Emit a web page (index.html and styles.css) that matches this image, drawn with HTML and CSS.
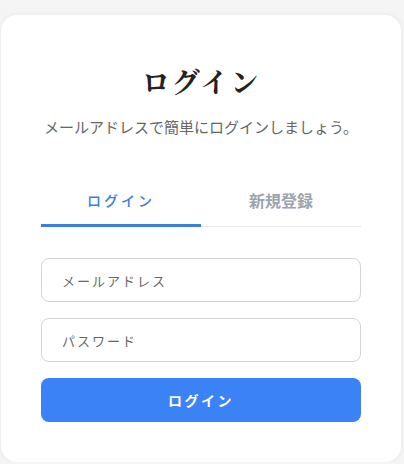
FILE: index.html
```html
<!DOCTYPE html>
<html lang="ja">
<head>
    <meta charset="UTF-8">
    <meta name="viewport" content="width=device-width, initial-scale=1.0">
    <title>ログイン</title>
    <link rel="stylesheet" href="styles.css">
</head>
<body>
    <div class="card">
        <h1 class="title">ログイン</h1>
        <p class="subtitle">メールアドレスで簡単にログインしましょう。</p>

        <div class="tabs">
            <button class="tab active">ログイン</button>
            <button class="tab">新規登録</button>
        </div>

        <form class="form">
            <input type="email" class="field" placeholder="メールアドレス">
            <input type="password" class="field" placeholder="パスワード">
            <button type="button" class="submit">ログイン</button>
        </form>
    </div>
</body>
</html>
```

FILE: styles.css
```css
body {
    margin: 0;
    background-color: #f5f5f6;
    font-family: "Noto Sans CJK JP", sans-serif;
    color: #333;
}

.card {
    background-color: #ffffff;
    width: 320px;
    margin: 15px 0 0 1px;
    padding: 40px;
    border-radius: 16px;
    box-shadow: 0 0 6px rgba(0, 0, 0, 0.06);
}

.title {
    margin: 10px 0 0;
    text-align: center;
    font-family: "Noto Serif CJK JP", serif;
    font-size: 28px;
    font-weight: bold;
    letter-spacing: 2px;
    color: #222;
    line-height: 32px;
}

.subtitle {
    margin: 20px 0 0;
    text-align: center;
    font-size: 15px;
    color: #666;
    line-height: 20px;
}

.tabs {
    display: flex;
    margin-top: 51px;
    border-bottom: 1px solid #e5e7eb;
}

.tab {
    flex: 1;
    background: none;
    border: none;
    border-bottom: 3px solid transparent;
    margin-bottom: -1px;
    padding: 0 0 12px;
    font-family: "Noto Sans CJK JP", sans-serif;
    font-size: 16px;
    font-weight: bold;
    color: #9ca3af;
    cursor: pointer;
}

.tab.active {
    color: #3b7de0;
    border-bottom-color: #3b7de0;
    font-size: 14px;
    font-weight: 500;
    letter-spacing: 3px;
}

.form {
    display: flex;
    flex-direction: column;
    gap: 16px;
    margin-top: 31px;
}

.field {
    height: 44px;
    box-sizing: border-box;
    padding: 0 20px;
    border: 1px solid #d1d5db;
    border-radius: 8px;
    font-family: "Noto Sans CJK JP", sans-serif;
    font-size: 13px;
    letter-spacing: 2px;
}

.field::placeholder {
    color: #666;
}

.submit {
    height: 44px;
    background-color: #3b82f6;
    color: #fff;
    border: none;
    border-radius: 8px;
    font-family: "Noto Sans CJK JP", sans-serif;
    font-size: 14px;
    font-weight: bold;
    letter-spacing: 2.5px;
    cursor: pointer;
}
```
